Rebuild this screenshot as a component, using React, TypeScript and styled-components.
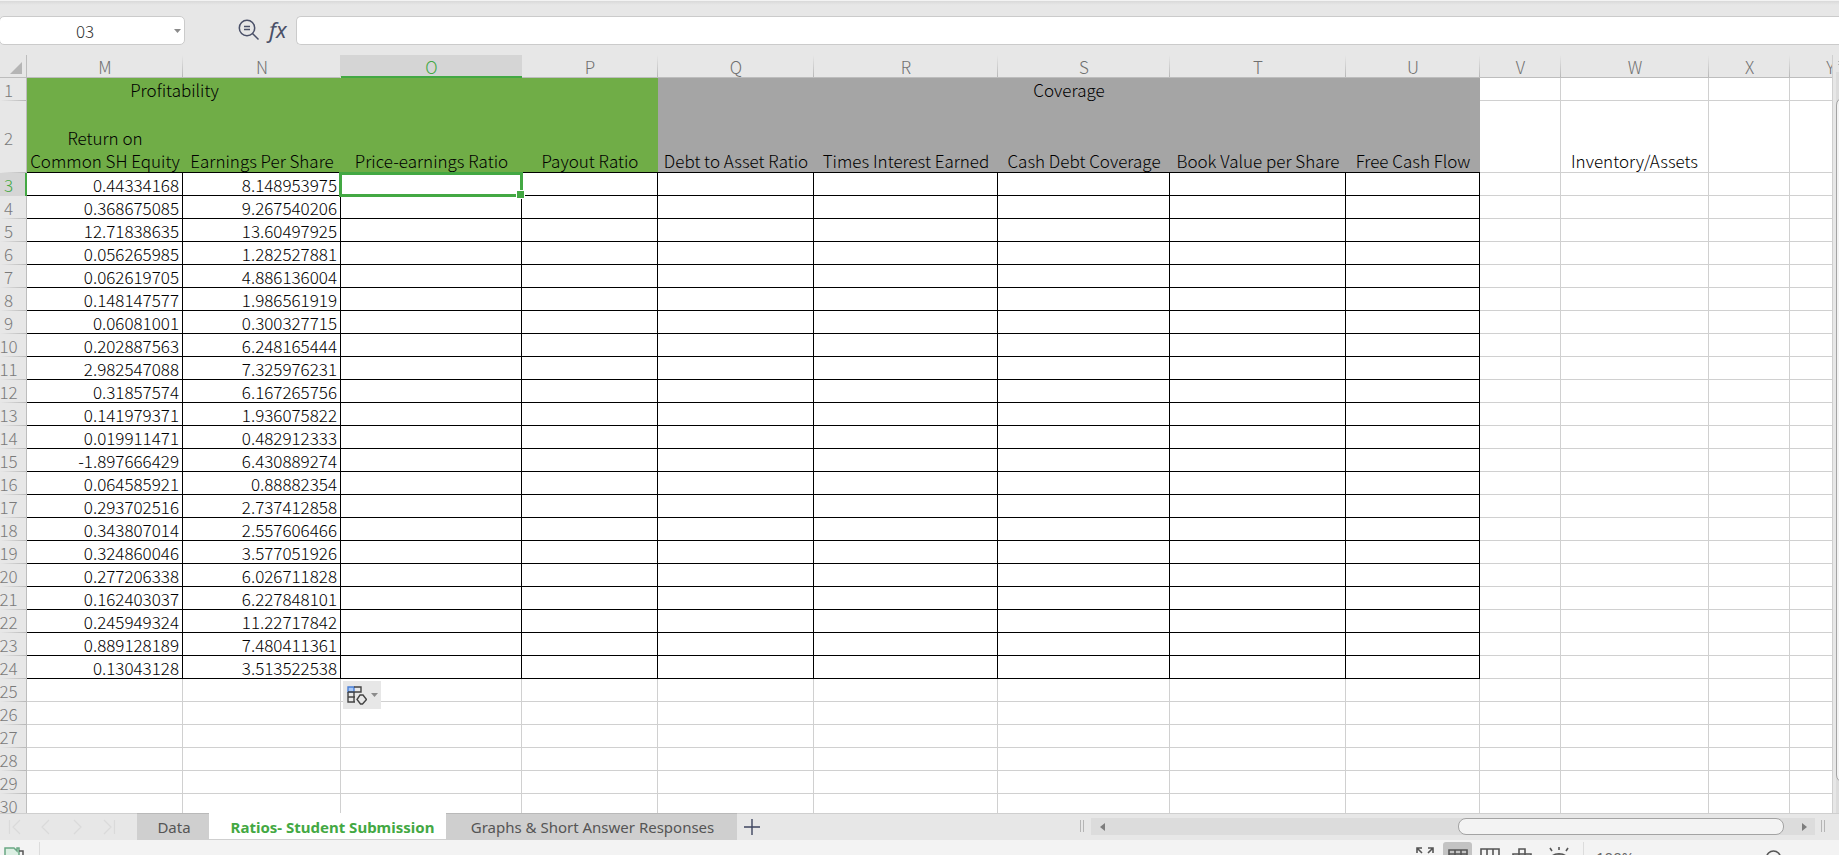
import React from "react";
import styled, { createGlobalStyle, css } from "styled-components";

const UI = `"Noto Sans", "Open Sans", sans-serif`;
const SHEET = `"Noto Sans CJK SC", "Noto Sans", sans-serif`;
const GREEN = "#43a843";
const CHROME = "#e7e7e7";
const GRID = "#d0d0d0";

const GlobalStyle = createGlobalStyle`
  * { box-sizing: border-box; }
  body { margin: 0; overflow: hidden; background: ${CHROME}; font-family: ${UI}; }
  button, input { font-family: inherit; }
  button { border: 0; padding: 0; background: none; cursor: pointer; }
`;

const Page = styled.div`
  display: flex;
  flex-direction: column;
  height: 100vh;
  overflow: hidden;
`;

const FormulaBar = styled.header`
  display: flex;
  align-items: flex-start;
  flex: none;
  height: 55px;
  padding-top: 15px;
  border-top: 1px solid #f3f3f3;
  background: linear-gradient(#d9d9d9, ${CHROME} 4px);
`;

const NameBox = styled.div`
  display: flex;
  align-items: center;
  width: 186px;
  height: 29px;
  margin-left: -1px;
  background: #fff;
  border: 1px solid #cbcbcb;
  border-radius: 5px;
`;

const NameInput = styled.input`
  flex: 1;
  min-width: 0;
  padding: 0;
  border: 0;
  outline: 0;
  background: none;
  color: #333;
  font-family: ${SHEET};
  font-size: 17px;
  font-weight: 300;
  text-align: center;
`;

const CaretButton = styled.button`
  display: flex;
  align-items: center;
  justify-content: center;
  width: 14px;
  height: 27px;
`;

const Tools = styled.div`
  display: flex;
  align-items: flex-start;
  gap: 9px;
  height: 29px;
  padding-top: 3px;
  margin-left: 53px;
  color: #4a5068;
`;

const ToolButton = styled.button`
  display: flex;
  color: inherit;
`;

const FxButton = styled(ToolButton)`
  width: 20px;
  font-size: 22px;
  line-height: 20px;
  font-style: italic;
`;

const FormulaInput = styled.input`
  flex: 1;
  min-width: 0;
  height: 29px;
  margin-left: 7px;
  padding: 0 8px;
  border: 1px solid #cbcbcb;
  border-right: 0;
  border-radius: 5px 0 0 5px;
  outline: 0;
  background: #fff;
  font-family: ${SHEET};
  font-size: 17px;
`;

const Workspace = styled.main`
  display: flex;
  flex: 1;
  min-height: 0;
`;

const SheetView = styled.div`
  flex: 1;
  min-width: 0;
  overflow: hidden;
  background: #fff;
`;

const Sheet = styled.table`
  width: 1871px;
  table-layout: fixed;
  border-collapse: separate;
  border-spacing: 0;
  font-family: ${SHEET};
  font-size: 17px;
  font-weight: 300;
  line-height: 20px;
  color: #000;
`;

const Col = styled.col<{ $w: number }>`
  width: ${(p) => p.$w}px;
`;

const Corner = styled.td`
  height: 23px;
  padding: 0 4px 3px 0;
  background: ${CHROME};
  border-right: 1px solid #bdbdbd;
  border-bottom: 1px solid #bdbdbd;
  vertical-align: bottom;
  line-height: 0;
  text-align: right;
`;

const ColHead = styled.th<{ $active?: boolean }>`
  height: 23px;
  padding: 2px 0 0;
  font-weight: 300;
  text-align: center;
  color: #707070;
  background: linear-gradient(#e7e7e7, #b8b8b8) right / 1px 100% no-repeat ${CHROME};
  border-bottom: 1px solid #bdbdbd;
  ${(p) =>
    p.$active &&
    css`
      color: ${GREEN};
      background: #d5d5d5;
      box-shadow: -1px 0 0 #d5d5d5, inset 0 -1px 0 ${GREEN}, -1px 1px 0 ${GREEN};
      border-bottom-color: ${GREEN};
    `}
`;

const RowHead = styled.th<{ $active?: boolean }>`
  padding: 0 9px 0 0;
  font-weight: 300;
  text-align: center;
  color: #7a7a7a;
  background: linear-gradient(90deg, #e7e7e7, #b8b8b8) bottom / 100% 1px no-repeat ${CHROME};
  border-right: 1px solid #bdbdbd;
  ${(p) =>
    p.$active &&
    css`
      color: ${GREEN};
      background: #d5d5d5;
      border-right-color: ${GREEN};
      box-shadow: inset -1px 0 0 ${GREEN};
    `}
`;

const RowLabel = styled.span`
  display: flex;
  justify-content: center;
  width: 17px;
  height: 23px;
  padding-top: 2px;
`;

const Cell = styled.td<{ $ink?: boolean }>`
  position: relative;
  height: 23px;
  padding: 2px 3px 0 0;
  text-align: right;
  white-space: nowrap;
  border-right: 1px solid ${(p) => (p.$ink ? "#000" : GRID)};
  border-bottom: 1px solid ${(p) => (p.$ink ? "#000" : GRID)};
`;

const Band = styled.th<{ $tone: string; $offset?: number }>`
  height: 23px;
  padding: 0 ${(p) => p.$offset || 0}px 0 0;
  font-weight: 300;
  text-align: center;
  background: ${(p) => p.$tone};
`;

const Title = styled.th<{ $tone?: string }>`
  height: 72px;
  padding: 0;
  font-weight: 300;
  line-height: 23px;
  vertical-align: bottom;
  text-align: center;
  white-space: pre;
  background: ${(p) => p.$tone || "#fff"};
  border-bottom: 1px solid ${(p) => (p.$tone ? "#000" : GRID)};
  border-right: ${(p) => (p.$tone ? 0 : `1px solid ${GRID}`)};
`;

const Selection = styled.div`
  position: absolute;
  z-index: 1;
  top: -1px;
  left: -2px;
  right: -2px;
  bottom: -2px;
  border: 3px solid ${GREEN};
  &::after {
    content: "";
    position: absolute;
    right: -5px;
    bottom: -5px;
    width: 7px;
    height: 7px;
    background: ${GREEN};
    border: 1px solid #fff;
  }
`;

const FillOptions = styled.button`
  position: absolute;
  z-index: 1;
  top: 2px;
  left: 2px;
  display: flex;
  align-items: center;
  justify-content: center;
  gap: 4px;
  width: 38px;
  height: 28px;
  background: ${CHROME};
`;

const VScroll = styled.div`
  display: flex;
  flex: none;
  flex-direction: column;
  width: 7px;
  padding-left: 3px;
  overflow: hidden;
  border-left: 1px solid #cfcfcf;
  background: ${CHROME};
`;

const VHead = styled.div`
  height: 17px;
  padding: 6px 0 0 2px;
`;

const SplitHandle = styled.div`
  width: 11px;
  height: 4px;
  border: solid #b5b5b5;
  border-width: 1px 0;
`;

const VTrack = styled.div`
  flex: 1;
  width: 17px;
  padding: 25px 0 30px;
  background: #dcdcdc;
`;

const VThumb = styled.div`
  height: 100%;
  background: #f3f3f3;
  border: 1px solid #a3a3a3;
  border-radius: 8px;
`;

const TabBar = styled.nav`
  display: flex;
  flex: none;
  height: 27px;
  background: ${CHROME};
  border-top: 1px solid #cfcfcf;
`;

const TabArea = styled.div`
  display: flex;
  width: 1080px;
  margin-top: -1px;
`;

const TabArrows = styled.div`
  display: flex;
  align-items: center;
  width: 137px;
  padding-left: 6px;
  color: #dadada;
`;

const Tab = styled.button<{ $w: number; $active?: boolean }>`
  width: ${(p) => p.$w}px;
  padding-left: 2px;
  font-size: 15px;
  line-height: 26px;
  white-space: nowrap;
  color: #555;
  background: #cfcfcf;
  border-top: 1px solid #b9b9b9;
  ${(p) =>
    p.$active &&
    css`
      padding-left: 10px;
      font-weight: 700;
      color: ${GREEN};
      background: #fff;
      border-top-color: #fff;
      box-shadow: inset 0 -1px 0 #cfcfcf;
    `}
`;

const AddTab = styled.button`
  display: flex;
  align-items: center;
  padding: 0 7px;
  color: #3f4660;
`;

const Grip = styled.div`
  flex: none;
  width: 4px;
  height: 12px;
  margin-top: 6px;
  border: solid #b5b5b5;
  border-width: 0 1px;
`;

const HTrack = styled.div`
  display: flex;
  flex: 1;
  min-width: 0;
  align-items: center;
  height: 17px;
  margin: 4px 6px 0 7px;
  background: #dcdcdc;
`;

const ArrowButton = styled.button`
  display: flex;
  flex: none;
  align-items: center;
  justify-content: center;
  width: 22px;
  height: 17px;
`;

const HSpace = styled.div`
  flex: 347;
`;

const HThumb = styled.div`
  flex: 325;
  height: 17px;
  margin-right: 9px;
  background: #f3f3f3;
  border: 1px solid #a3a3a3;
  border-radius: 8px;
`;

const EndGrip = styled(Grip)`
  margin-right: 14px;
`;

const StatusBar = styled.footer`
  display: flex;
  flex: none;
  justify-content: space-between;
  height: 15px;
  overflow: hidden;
  color: #555;
  background: #f3f3f3;
`;

const StatusLeft = styled.div`
  display: flex;
  gap: 15px;
  padding-left: 4px;
`;

const StatusRight = styled.div`
  display: flex;
  gap: 8px;
  padding-right: 57px;
`;

const StatusButton = styled.button<{ $w?: number; $active?: boolean }>`
  display: flex;
  flex: none;
  justify-content: center;
  width: ${(p) => p.$w || 20}px;
  height: 28px;
  margin-top: 2px;
  padding-top: 5px;
  border-radius: 3px;
  color: inherit;
  background: ${(p) => (p.$active ? "#c3c3c3" : "none")};
`;

const Divider = styled.div`
  width: 1px;
  height: 24px;
  margin-top: 2px;
  background: #dcdcdc;
`;

const ZoomLabel = styled.button`
  flex: none;
  width: 165px;
  height: 24px;
  margin-top: 5px;
  padding-left: 4px;
  font-size: 15px;
  line-height: 20px;
  text-align: left;
  color: #666;
`;

const TinyCaret = () => (
  <svg width="7" height="4" viewBox="0 0 7 4">
    <path d="M0 0h7L3.5 4z" fill="#8b8b8b" />
  </svg>
);

const GREEN_TONE = "#70ad47";
const GRAY_TONE = "#a5a5a5";

const columns: { id: string; w: number; title?: string; tone?: string }[] = [
  { id: "M", w: 156, title: "Return on\nCommon SH Equity", tone: GREEN_TONE },
  { id: "N", w: 158, title: "Earnings Per Share", tone: GREEN_TONE },
  { id: "O", w: 181, title: "Price-earnings Ratio", tone: GREEN_TONE },
  { id: "P", w: 136, title: "Payout Ratio", tone: GREEN_TONE },
  { id: "Q", w: 156, title: "Debt to Asset Ratio", tone: GRAY_TONE },
  { id: "R", w: 184, title: "Times Interest Earned", tone: GRAY_TONE },
  { id: "S", w: 172, title: "Cash Debt Coverage", tone: GRAY_TONE },
  { id: "T", w: 176, title: "Book Value per Share", tone: GRAY_TONE },
  { id: "U", w: 134, title: "Free Cash Flow", tone: GRAY_TONE },
  { id: "V", w: 81 },
  { id: "W", w: 148, title: "Inventory/Assets" },
  { id: "X", w: 81 },
  { id: "Y", w: 81 },
];

const values: [string, string][] = [
  ["0.44334168", "8.148953975"],
  ["0.368675085", "9.267540206"],
  ["12.71838635", "13.60497925"],
  ["0.056265985", "1.282527881"],
  ["0.062619705", "4.886136004"],
  ["0.148147577", "1.986561919"],
  ["0.06081001", "0.300327715"],
  ["0.202887563", "6.248165444"],
  ["2.982547088", "7.325976231"],
  ["0.31857574", "6.167265756"],
  ["0.141979371", "1.936075822"],
  ["0.019911471", "0.482912333"],
  ["-1.897666429", "6.430889274"],
  ["0.064585921", "0.88882354"],
  ["0.293702516", "2.737412858"],
  ["0.343807014", "2.557606466"],
  ["0.324860046", "3.577051926"],
  ["0.277206338", "6.026711828"],
  ["0.162403037", "6.227848101"],
  ["0.245949324", "11.22717842"],
  ["0.889128189", "7.480411361"],
  ["0.13043128", "3.513522538"],
];

const rowNumbers = Array.from({ length: 28 }, (_, i) => i + 3);

const cellText = (row: number, col: string) => {
  const pair = values[row - 3];
  if (!pair) return null;
  return col === "M" ? pair[0] : col === "N" ? pair[1] : null;
};

const FillIcon = () => (
  <svg width="20" height="19" viewBox="0 0 20 19" fill="none" stroke="#444" strokeWidth="1.4">
    <path d="M1 1h6v5H1z" fill="#a9c8f5" stroke="#4a7fd6" />
    <path d="M7 1h7v5H7M7 6v10M1 6v10h7M1 11h7M1 6h6" />
    <path d="M13 9h3l3.500 4.500-4 4.500h-2L10 13.500z" fill="#e7e7e7" />
  </svg>
);

export default function App() {
  return (
    <Page>
      <GlobalStyle />
      <FormulaBar>
        <NameBox>
          <NameInput aria-label="Name box" defaultValue="03" />
          <CaretButton aria-label="Named ranges">
            <TinyCaret />
          </CaretButton>
        </NameBox>
        <Tools>
          <ToolButton aria-label="Find formula">
            <svg width="22" height="22" viewBox="0 0 22 22" fill="none" stroke="currentColor" strokeWidth="1.5">
              <circle cx="9" cy="9" r="7.700" />
              <path d="M14.500 14.500l6 6M6 7.500h6M6 10.500h6" />
            </svg>
          </ToolButton>
          <FxButton aria-label="Insert function">fx</FxButton>
        </Tools>
        <FormulaInput aria-label="Formula" />
      </FormulaBar>

      <Workspace>
        <SheetView>
          <Sheet>
            <colgroup>
              <Col $w={27} />
              {columns.map((c) => (
                <Col key={c.id} $w={c.w} />
              ))}
            </colgroup>
            <thead>
              <tr>
                <Corner>
                  <svg width="12" height="12" viewBox="0 0 12 12">
                    <path d="M12 0v12H0z" fill="#b5b5b5" />
                  </svg>
                </Corner>
                {columns.map((c) => (
                  <ColHead key={c.id} scope="col" $active={c.id === "O"}>
                    {c.id}
                  </ColHead>
                ))}
              </tr>
            </thead>
            <tbody>
              <tr>
                <RowHead scope="row">
                  <RowLabel>1</RowLabel>
                </RowHead>
                {/* the merged range begins left of the first visible column */}
                <Band colSpan={4} $tone={GREEN_TONE} $offset={336}>
                  Profitability
                </Band>
                <Band colSpan={5} $tone={GRAY_TONE}>
                  Coverage
                </Band>
                {columns.slice(9).map((c) => (
                  <Cell key={c.id} />
                ))}
              </tr>
              <tr>
                <RowHead scope="row">
                  <RowLabel>2</RowLabel>
                </RowHead>
                {columns.map((c) => (
                  <Title key={c.id} $tone={c.tone}>
                    {c.title}
                  </Title>
                ))}
              </tr>
              {rowNumbers.map((n) => (
                <tr key={n}>
                  <RowHead scope="row" $active={n === 3}>
                    <RowLabel>{n}</RowLabel>
                  </RowHead>
                  {columns.map((c) => (
                    <Cell key={c.id} $ink={n <= 24 && !!c.tone}>
                      {cellText(n, c.id)}
                      {n === 3 && c.id === "O" && <Selection />}
                      {n === 25 && c.id === "O" && (
                        <FillOptions aria-label="Fill options">
                          <FillIcon />
                          <TinyCaret />
                        </FillOptions>
                      )}
                    </Cell>
                  ))}
                </tr>
              ))}
            </tbody>
          </Sheet>
        </SheetView>
        <VScroll>
          <VHead>
            <SplitHandle />
          </VHead>
          <VTrack>
            <VThumb />
          </VTrack>
        </VScroll>
      </Workspace>

      <TabBar>
        <TabArea>
          <TabArrows>
            <svg width="112" height="16" viewBox="0 0 112 16" fill="none" stroke="currentColor" strokeWidth="1.200">
              <path d="M3.500 1v14M14 1L7 8l7 7M43 1l-7 7 7 7M68 1l7 7-7 7M98 1l7 7-7 7M108.500 1v14" />
            </svg>
          </TabArrows>
          <Tab $w={72}>Data</Tab>
          <Tab $w={237} $active>
            Ratios- Student Submission
          </Tab>
          <Tab $w={291}>Graphs &amp; Short Answer Responses</Tab>
          <AddTab aria-label="Add sheet">
            <svg width="16" height="16" viewBox="0 0 16 16" stroke="currentColor" strokeWidth="1.400">
              <path d="M8 0v16M0 8h16" />
            </svg>
          </AddTab>
        </TabArea>
        <Grip />
        <HTrack>
          <ArrowButton aria-label="Scroll left">
            <svg width="5" height="8" viewBox="0 0 5 8">
              <path d="M5 0v8L0 4z" fill="#7d7d7d" />
            </svg>
          </ArrowButton>
          <HSpace />
          <HThumb />
          <ArrowButton aria-label="Scroll right">
            <svg width="5" height="8" viewBox="0 0 5 8">
              <path d="M0 0v8l5-4z" fill="#7d7d7d" />
            </svg>
          </ArrowButton>
        </HTrack>
        <EndGrip />
      </TabBar>

      <StatusBar>
        <StatusLeft>
          <StatusButton aria-label="Macro">
            <svg width="20" height="20" viewBox="0 0 20 20" fill="none" strokeWidth="1.500">
              <path d="M1 16V1h9l3 3V1h2v15z" stroke="#6aa884" fill="#dcefe3" />
              <path d="M15 4h4v14H6" stroke="#555" />
            </svg>
          </StatusButton>
          <Divider />
        </StatusLeft>
        <StatusRight>
          <StatusButton aria-label="Full screen">
            <svg width="18" height="18" viewBox="0 0 18 18" fill="none" stroke="currentColor" strokeWidth="1.600">
              <path d="M1 6V1h5M12 1h5v5M1 1l5 5M17 1l-5 5M1 12v5h5M17 12v5h-5M1 17l5-5M17 17l-5-5" />
            </svg>
          </StatusButton>
          <StatusButton $w={29} $active aria-label="Normal view">
            <svg width="20" height="18" viewBox="0 0 20 18" fill="none" stroke="currentColor" strokeWidth="1.600">
              <path d="M1 3h18v14H1zM1 7h18M1 12h18M7 3v14M13 3v14" />
            </svg>
          </StatusButton>
          <StatusButton aria-label="Page layout">
            <svg width="20" height="18" viewBox="0 0 20 18" fill="none" stroke="currentColor" strokeWidth="1.600">
              <path d="M1 2h18v15H1zM7 2v9M13 2v9M1 11h18" />
            </svg>
          </StatusButton>
          <StatusButton $w={27} aria-label="Page break view">
            <svg width="20" height="18" viewBox="0 0 20 18" fill="none" stroke="currentColor" strokeWidth="1.600">
              <path d="M7 7V2h6v5M1 7h18v6H1zM7 7v10h6V7" />
            </svg>
          </StatusButton>
          <StatusButton $w={32} aria-label="Reading mode">
            <svg width="20" height="18" viewBox="0 0 20 18" fill="none" stroke="currentColor" strokeWidth="1.600">
              <path d="M10 0v3M1 1l2 3M19 1l-2 3M1 12c3-7 15-7 18 0-3 6-15 6-18 0z" />
              <circle cx="10" cy="11" r="3" />
            </svg>
          </StatusButton>
          <Divider />
          <ZoomLabel>100%</ZoomLabel>
          <StatusButton $w={17} aria-label="Zoom level">
            <svg width="17" height="20" viewBox="0 0 17 20" fill="none" stroke="currentColor" strokeWidth="1.600">
              <circle cx="8.500" cy="11" r="7" />
            </svg>
          </StatusButton>
        </StatusRight>
      </StatusBar>
    </Page>
  );
}
